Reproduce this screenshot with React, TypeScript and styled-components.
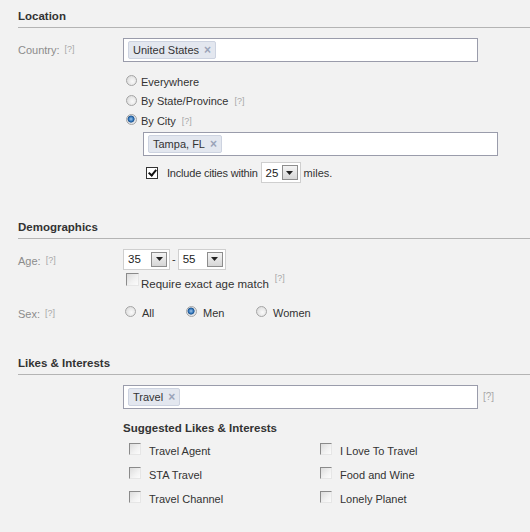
import { ReactNode } from 'react';
import styled, { createGlobalStyle } from 'styled-components';

const GlobalStyle = createGlobalStyle`
  html, body {
    margin: 0;
    padding: 0;
    background: #f2f2f2;
  }
  body {
    font-family: 'Liberation Sans', Arial, sans-serif;
    font-size: 11px;
    color: #333;
  }
`;

const suggested = [
  ['Travel Agent', 'I Love To Travel'],
  ['STA Travel', 'Food and Wine'],
  ['Travel Channel', 'Lonely Planet'],
];

const Help = ({ gap = 5 }: { gap?: number }) => <HelpMark $gap={gap}>[?]</HelpMark>;

const Token = ({ children }: { children: ReactNode }) => (
  <TokenBox>
    {children}
    <TokenX>×</TokenX>
  </TokenBox>
);

const Select = ({ value, width }: { value: string; width: number }) => (
  <SelectBox $w={width}>
    <span>{value}</span>
    <ArrowButton>
      <svg width="7" height="4" viewBox="0 0 7 4">
        <path d="M0 0h7L3.5 4z" fill="#222" />
      </svg>
    </ArrowButton>
  </SelectBox>
);

const App = () => {
  return (
    <>
      <GlobalStyle />
      <Page>
        <Section $gap={28}>
          <SectionTitle>Location</SectionTitle>
          <Row>
            <Label>
              Country:
              <Help />
            </Label>
            <Field>
              <TokenInput>
                <Token>United States</Token>
              </TokenInput>
              <RadioList>
                <Choice>
                  <Radio />
                  Everywhere
                </Choice>
                <Choice>
                  <Radio />
                  By State/Province
                  <Help gap={6} />
                </Choice>
                <Choice>
                  <Radio $checked />
                  By City
                  <Help gap={6} />
                </Choice>
              </RadioList>
              <Indented>
                <TokenInput>
                  <Token>Tampa, FL</Token>
                </TokenInput>
                <WithinRow>
                  <CheckBox $checked />
                  <WithinText>Include cities within</WithinText>
                  <Select value="25" width={40} />
                  <span>miles.</span>
                </WithinRow>
              </Indented>
            </Field>
          </Row>
        </Section>

        <Section $gap={23}>
          <SectionTitle>Demographics</SectionTitle>
          <Row>
            <Label>
              Age:
              <Help />
            </Label>
            <Field>
              <AgeRow>
                <Select value="35" width={47} />
                <Dash>-</Dash>
                <Select value="55" width={48} />
              </AgeRow>
              <ExactRow>
                <CheckBox $large />
                <ExactText>Require exact age match</ExactText>
                <Help gap={6} />
              </ExactRow>
            </Field>
          </Row>
          <SexRow>
            <Label>
              Sex:
              <Help />
            </Label>
            <SexOptions>
              <SexChoice $w={61}>
                <Radio />
                All
              </SexChoice>
              <SexChoice $w={70}>
                <Radio $checked />
                Men
              </SexChoice>
              <SexChoice $w={80}>
                <Radio />
                Women
              </SexChoice>
            </SexOptions>
          </SexRow>
        </Section>

        <Section $gap={0}>
          <SectionTitle>Likes &amp; Interests</SectionTitle>
          <Row>
            <Label />
            <Field>
              <InputWithHelp>
                <TokenInput>
                  <Token>Travel</Token>
                </TokenInput>
                <SideHelp>[?]</SideHelp>
              </InputWithHelp>
              <SuggestTitle>Suggested Likes &amp; Interests</SuggestTitle>
              <SuggestGrid>
                {suggested.flat().map((item) => (
                  <SuggestItem key={item}>
                    <CheckBox />
                    {item}
                  </SuggestItem>
                ))}
              </SuggestGrid>
            </Field>
          </Row>
        </Section>
      </Page>
    </>
  );
};

const Page = styled.main`
  width: 530px;
  height: 532px;
  overflow: hidden;
  padding-left: 18px;
  box-sizing: border-box;
`;

const Section = styled.section<{ $gap: number }>`
  margin-bottom: ${(p) => p.$gap}px;
`;

const SectionTitle = styled.h2`
  margin: 0;
  padding: 9px 0 4px;
  font-size: 11.5px;
  font-weight: bold;
  line-height: 14px;
  color: #333;
  border-bottom: 1px solid #b4b4b4;
`;

const Row = styled.div`
  display: flex;
  margin-top: 10px;
`;

const Label = styled.div`
  width: 105px;
  flex-shrink: 0;
  padding-top: 4px;
  line-height: 14px;
  color: #8c8c8c;
`;

const HelpMark = styled.span<{ $gap: number }>`
  margin-left: ${(p) => p.$gap}px;
  font-size: 9px;
  color: #a8a8a8;
  vertical-align: 2px;
`;

const Field = styled.div`
  display: flex;
  flex-direction: column;
`;

const TokenInput = styled.div`
  width: 355px;
  height: 24px;
  box-sizing: border-box;
  border: 1px solid #9a9cab;
  background: #fff;
  display: flex;
  align-items: center;
  padding-left: 4px;
`;

const TokenBox = styled.span`
  display: inline-flex;
  align-items: center;
  height: 18px;
  box-sizing: border-box;
  padding: 0 4px 0 4px;
  border: 1px solid #cdd3e0;
  border-radius: 2px;
  background: #e3e7ef;
  color: #333;
`;

const TokenX = styled.span`
  margin-left: 5px;
  color: #9aa3b8;
  font-size: 12px;
  font-weight: bold;
`;

const RadioList = styled.div`
  display: flex;
  flex-direction: column;
  margin-top: 10px;
`;

const Choice = styled.label`
  display: flex;
  align-items: center;
  height: 19.5px;
  color: #333;
`;

const Radio = styled.span<{ $checked?: boolean }>`
  width: 11px;
  height: 11px;
  margin: 0 4px 0 3px;
  border-radius: 50%;
  box-sizing: border-box;
  border: 1px solid #a5a5a5;
  background: ${(p) =>
    p.$checked
      ? 'radial-gradient(circle at 45% 45%, #9fc6ea 0, #2a6fb5 35%, #1d4f86 45%, #dfe3e8 55%, #f4f4f4 100%)'
      : 'radial-gradient(circle at 60% 60%, #fafafa 0, #e4e4e4 60%, #cfcfcf 100%)'};
  position: relative;
  top: -1px;
`;

const Indented = styled.div`
  padding-left: 20px;
  margin-top: 1px;
`;

const WithinRow = styled.div`
  display: flex;
  align-items: center;
  margin-top: 7px;
  height: 20px;
  gap: 3px;
`;

const WithinText = styled.span`
  margin-left: 3px;
  letter-spacing: -0.2px;
`;

const CheckBox = styled.span<{ $checked?: boolean; $large?: boolean }>`
  width: ${(p) => (p.$large ? 13 : 12)}px;
  height: ${(p) => (p.$large ? 13 : 12)}px;
  box-sizing: border-box;
  margin: 0 3px;
  flex-shrink: 0;
  border: 1px solid;
  border-color: ${(p) =>
    p.$checked ? '#333 #333 #333 #333' : '#8a8a8a #e6e6e6 #e6e6e6 #8a8a8a'};
  background: ${(p) =>
    p.$checked
      ? '#fff'
      : 'linear-gradient(135deg, #dcdcdc 0%, #f2f2f2 60%, #fbfbfb 100%)'};
  position: relative;
  &::after {
    content: ${(p) => (p.$checked ? "''" : 'none')};
    position: absolute;
    left: 3px;
    top: 0px;
    width: 3px;
    height: 6px;
    border: solid #111;
    border-width: 0 2px 2px 0;
    transform: rotate(40deg);
  }
`;

const SelectBox = styled.span<{ $w: number }>`
  display: inline-flex;
  align-items: center;
  justify-content: space-between;
  width: ${(p) => p.$w}px;
  height: 21px;
  box-sizing: border-box;
  border: 1px solid #cfcfcf;
  background: #fff;
  padding: 0 2px 0 4px;
  color: #222;
  font-size: 11.5px;
`;

const ArrowButton = styled.span`
  width: 16px;
  height: 15px;
  box-sizing: border-box;
  border: 1px solid #8d8d8d;
  background: linear-gradient(#f4f4f4, #d6d6d6);
  display: flex;
  align-items: center;
  justify-content: center;
`;

const AgeRow = styled.div`
  display: flex;
  align-items: center;
  gap: 2px;
`;

const Dash = styled.span`
  color: #333;
`;

const ExactRow = styled.div`
  display: flex;
  align-items: flex-start;
  margin-top: 3px;
  height: 18px;
`;

const ExactText = styled.span`
  margin-left: -1px;
  padding-top: 4px;
  font-size: 11.5px;
  line-height: 14px;
`;

const SexRow = styled.div`
  display: flex;
  margin-top: 11px;
`;

const SexOptions = styled.div`
  display: flex;
  align-items: center;
  height: 22px;
`;

const SexChoice = styled.label<{ $w: number }>`
  display: flex;
  align-items: center;
  width: ${(p) => p.$w}px;
  color: #333;
  & > span {
    margin: 0 6px 0 2px;
  }
`;

const InputWithHelp = styled.div`
  display: flex;
  align-items: center;
  gap: 5px;
`;

const SideHelp = styled.span`
  color: #a8a8a8;
  font-size: 10px;
`;

const SuggestTitle = styled.h3`
  margin: 12px 0 0;
  font-size: 11.5px;
  line-height: 14px;
  font-weight: bold;
  color: #333;
`;

const SuggestGrid = styled.div`
  display: grid;
  grid-template-columns: 191px 160px;
  grid-auto-rows: 24px;
  margin-top: 4px;
  padding-left: 3px;
`;

const SuggestItem = styled.label`
  display: flex;
  align-items: center;
  color: #333;
  & > span {
    margin: 0 8px 0 3px;
    position: relative;
    top: -2px;
  }
`;

export default App;
